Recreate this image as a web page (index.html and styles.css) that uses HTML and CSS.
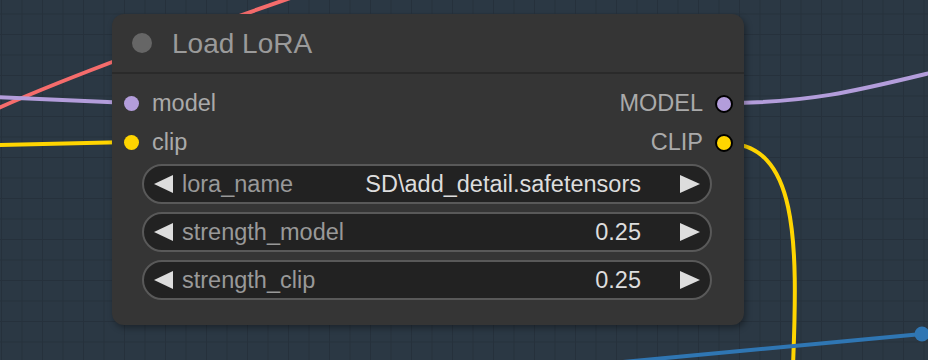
FILE: index.html
```html
<!DOCTYPE html>
<html lang="en">
<head>
  <meta charset="UTF-8">
  <title>Load LoRA</title>
  <link rel="stylesheet" href="styles.css">
</head>
<body>

  <div class="canvas">
    <!-- wires under the node -->
    <svg class="wires" width="928" height="360" viewBox="0 0 928 360">
      <path d="M -6 110 C 70 76, 170 40, 296 -4" stroke="#f56c6c" />
      <path d="M -4 97 L 130 103" stroke="#b39ddb" />
      <path d="M -4 145 L 130 142" stroke="#ffd500" />
      <path d="M 724 103 C 810 103, 860 90, 934 72" stroke="#b39ddb" />
      <path d="M 724 143 C 798 143, 798 240, 793 366" stroke="#ffd500" />
      <path d="M 580 366 L 922 334" stroke="#2f76b3" />
      <circle cx="922" cy="334" r="7.5" fill="#2f76b3" />
    </svg>

    <div class="node">
      <div class="node-header">
        <span class="node-dot"></span>
        <span class="node-title">Load LoRA</span>
      </div>

      <div class="node-body">
        <div class="slot-row">
          <div class="slot">
            <span class="dot dot-model"></span>
            <span>model</span>
          </div>
          <div class="slot slot-out">
            <span>MODEL</span>
            <span class="dot dot-model out"></span>
          </div>
        </div>
        <div class="slot-row">
          <div class="slot">
            <span class="dot dot-clip"></span>
            <span>clip</span>
          </div>
          <div class="slot slot-out">
            <span>CLIP</span>
            <span class="dot dot-clip out"></span>
          </div>
        </div>

        <div class="widgets">
          <div class="widget">
            <span class="arrow left"></span>
            <span class="w-label">lora_name</span>
            <span class="w-value">SD\add_detail.safetensors</span>
            <span class="arrow right"></span>
          </div>
          <div class="widget">
            <span class="arrow left"></span>
            <span class="w-label">strength_model</span>
            <span class="w-value">0.25</span>
            <span class="arrow right"></span>
          </div>
          <div class="widget">
            <span class="arrow left"></span>
            <span class="w-label">strength_clip</span>
            <span class="w-value">0.25</span>
            <span class="arrow right"></span>
          </div>
        </div>
      </div>
    </div>
  </div>

</body>
</html>
```

FILE: styles.css
```css
/* ====== canvas ====== */
body {
  margin: 0;
  font-family: "Liberation Sans", Arial, sans-serif;
  background: #2b3844;
}
.canvas {
  position: relative;
  width: 928px;
  height: 360px;
  overflow: hidden;
  background-color: #2b3844;
  background-image:
    linear-gradient(to right, #26313c 1px, transparent 1px),
    linear-gradient(to bottom, #26313c 1px, transparent 1px);
  background-size: 20.5px 20.5px;
  background-position: 1px -7px;
}
.wires {
  position: absolute;
  left: 0;
  top: 0;
}
.wires path {
  fill: none;
  stroke-width: 4;
}

/* ====== node ====== */
.node {
  position: absolute;
  left: 112px;
  top: 14px;
  width: 632px;
  background: #353535;
  border-radius: 12px;
  box-shadow: 2px 3px 6px rgba(0,0,0,0.35);
  display: flex;
  flex-direction: column;
}
.node-header {
  height: 58px;
  display: flex;
  align-items: center;
  gap: 20px;
  padding-left: 20px;
  border-bottom: 2px solid #2a2a2a;
}
.node-dot {
  width: 20px;
  height: 20px;
  border-radius: 50%;
  background: #666;
}
.node-title {
  font-size: 28px;
  color: #9a9a9a;
  margin-top: 2px;
}
.node-body {
  padding: 10px 11px 25px 12px;
}
.slot-row {
  height: 39px;
  display: flex;
  align-items: center;
  justify-content: space-between;
}
.slot {
  display: flex;
  align-items: center;
  gap: 13px;
  font-size: 23.5px;
  color: #aaa;
}
.slot-out {
  gap: 12px;
}
.dot {
  width: 15px;
  height: 15px;
  border-radius: 50%;
}
.dot.out {
  width: 14px;
  height: 14px;
  border: 2px solid #000;
}
.dot-model { background: #b39ddb; }
.dot-clip  { background: #ffd500; }

/* ====== widgets ====== */
.widgets {
  display: flex;
  flex-direction: column;
  gap: 8px;
  margin: 2px 21px 0 18px;
}
.widget {
  height: 36px;
  border: 2px solid #595959;
  border-radius: 20px;
  background: #222;
  display: flex;
  align-items: center;
  padding: 0 10px;
  font-size: 23.5px;
}
.w-label {
  color: #999;
  margin-left: 9px;
  flex: 1;
}
.w-value {
  color: #ddd;
  margin-right: 39px;
}
.arrow {
  width: 0;
  height: 0;
  border-top: 9px solid transparent;
  border-bottom: 9px solid transparent;
}
.arrow.left  { border-right: 19px solid #ddd; }
.arrow.right { border-left: 20px solid #ddd; }
```
